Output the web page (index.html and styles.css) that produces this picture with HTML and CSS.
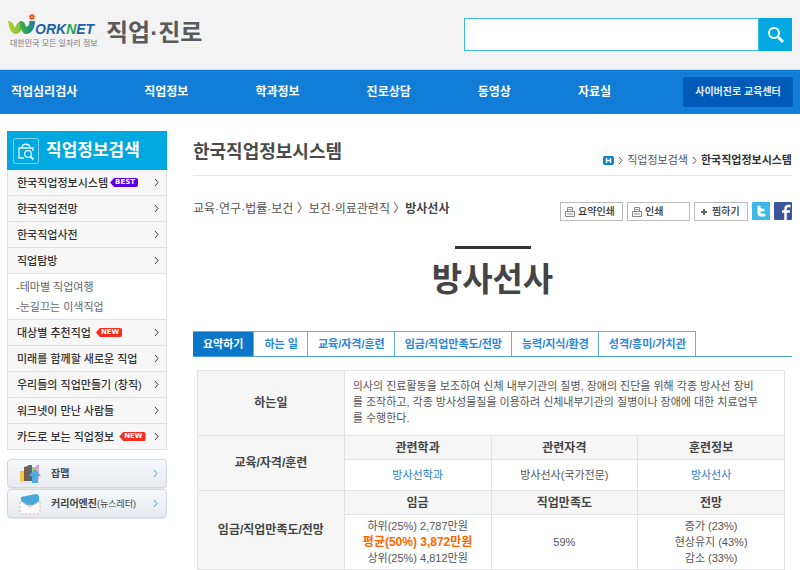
FILE: index.html
```html
<!DOCTYPE html>
<html lang="ko">
<head>
<meta charset="utf-8">
<title>워크넷 직업·진로</title>
<link rel="stylesheet" href="styles.css">
</head>
<body>
<svg class="defs" width="0" height="0" aria-hidden="true">
  <symbol id="chevron" viewBox="0 0 5 9"><path d="M1 1l3 3.500-3 3.500" fill="none" stroke="currentColor"/></symbol>
  <symbol id="printer" viewBox="0 0 10 10"><path d="M2.500 4.500v-4h5v4M.5 9.500v-5h9v5zM2 7h6M3.500 2.500h3" fill="none" stroke="currentColor"/></symbol>
</svg>
<header class="top">
  <a class="brand" href="#" aria-label="WORKNET">
    <svg class="logo" viewBox="0 0 88 22" aria-hidden="true">
      <defs>
        <linearGradient id="leaf" x1="0" x2="1"><stop offset="0" stop-color="#b2cf2c"/><stop offset=".65" stop-color="#8fc63b"/><stop offset="1" stop-color="#32a75a"/></linearGradient>
        <linearGradient id="stem" x1="0" x2="1"><stop offset="0" stop-color="#4cb04a"/><stop offset=".6" stop-color="#1f9a62"/><stop offset="1" stop-color="#2674b8"/></linearGradient>
      </defs>
      <path d="M0 7c4 0 5 2 7 7 2-5 4-7 7-7l2 3c-2 6-5 10-8 10C3 20 1 14 0 7z" fill="url(#leaf)"/>
      <path d="M11 8c4-2 6 0 7 5 3-1 4-4 3-6h6c0 8-4 13-9 13-4 0-5-6-7-12z" fill="url(#stem)"/>
      <circle cx="24" cy="3" r="2.700" fill="#e8501f"/><circle cx="24" cy="3" r="1" fill="#f9a33a"/>
      <text class="logo-text" x="27" y="20" fill="#1d63ad">ORK<tspan fill="#25a556">N</tspan>ET</text>
    </svg>
    <span class="tagline">대한민국 모든 일자리 정보</span>
  </a>
  <a class="section-name" href="#">직업·진로</a>
  <form class="search">
    <input type="text" aria-label="검색어">
    <button type="button" aria-label="검색"><svg viewBox="0 0 18 18"><circle cx="7" cy="7" r="5" fill="none" stroke="#fff" stroke-width="2"/><path d="M11 11l5 5" stroke="#fff" stroke-width="3"/></svg></button>
  </form>
</header>
<nav class="gnb">
  <div class="gnb-links">
    <a href="#">직업심리검사</a><a href="#">직업정보</a><a href="#">학과정보</a><a href="#">진로상담</a><a href="#">동영상</a><a href="#">자료실</a>
  </div>
  <a class="edu" href="#">사이버진로 교육센터</a>
</nav>
<div class="page">
  <aside>
    <div class="side-title">
      <svg viewBox="0 0 26 26" aria-hidden="true"><rect x=".5" y=".5" width="25" height="25" rx="2" fill="none" stroke="#7fd4f1"/><path d="M11 20H6V10h14v3M9 10c0-5 8-5 8 0" fill="none" stroke="#e4f6fc" stroke-width="1.300"/><circle cx="15" cy="16" r="3.300" fill="none" stroke="#e4f6fc" stroke-width="1.300"/><path d="M17.500 18.500l3 3" stroke="#e4f6fc" stroke-width="1.800"/></svg>
      <h2>직업정보검색</h2>
    </div>
    <ul class="menu">
      <li><a href="#">한국직업정보시스템<span class="badge best">BEST</span><svg class="chev"><use href="#chevron"/></svg></a></li>
      <li><a href="#">한국직업전망<svg class="chev"><use href="#chevron"/></svg></a></li>
      <li><a href="#">한국직업사전<svg class="chev"><use href="#chevron"/></svg></a></li>
      <li><a href="#">직업탐방<svg class="chev"><use href="#chevron"/></svg></a>
        <ul class="sub"><li><a href="#">-테마별 직업여행</a></li><li><a href="#">-눈길끄는 이색직업</a></li></ul></li>
      <li><a href="#">대상별 추천직업<span class="badge new">NEW</span><svg class="chev"><use href="#chevron"/></svg></a></li>
      <li><a href="#">미래를 함께할 새로운 직업<svg class="chev"><use href="#chevron"/></svg></a></li>
      <li><a href="#">우리들의 직업만들기 (창직)<svg class="chev"><use href="#chevron"/></svg></a></li>
      <li><a href="#">워크넷이 만난 사람들<svg class="chev"><use href="#chevron"/></svg></a></li>
      <li><a href="#">카드로 보는 직업정보<span class="badge new">NEW</span><svg class="chev"><use href="#chevron"/></svg></a></li>
    </ul>
    <div class="banners">
      <a href="#"><svg class="pic" viewBox="0 0 22 22" aria-hidden="true"><path d="M1 8h4v10H1z" fill="#efc94b"/><path d="M5 4l4-1v15H5z" fill="#7d5a48"/><path d="M9 2h4v16H9z" fill="#5b6675"/><path d="M13 4h4v14h-4z" fill="#a8cf63"/><path d="M17 2h3v14h-3z" fill="#dda5d8"/><path d="M16 6l6 7h-3v7h-6v-7h-3z" fill="#4fade0"/><path d="M1 19h11" stroke="#cfd4d8"/></svg><b>잡맵</b><svg class="chev"><use href="#chevron"/></svg></a>
      <a href="#"><svg class="pic" viewBox="0 0 22 22" aria-hidden="true"><path d="M1 8v11q0 2 2 2h16q2 0 2-2V8z" fill="#fbfbfc"/><path d="M1 9v10q0 2 2 2h16q2 0 2-2V9" fill="none" stroke="#e5a7a7" stroke-dasharray="2 2"/><path d="M2 4l15-3q3 0 3 3v5l-5 3H7L2 8z" fill="#4aa9dc"/><path d="M1 8l10 6 10-6" fill="none" stroke="#d5d8de"/><circle cx="11" cy="13" r="1.500" fill="#e8c48a"/></svg><b>커리어엔진</b><small>(뉴스레터)</small><svg class="chev"><use href="#chevron"/></svg></a>
    </div>
  </aside>
  <main>
    <div class="heading">
      <h1>한국직업정보시스템</h1>
      <div class="path"><a class="home" href="#" aria-label="홈"><svg viewBox="0 0 11 9"><rect width="11" height="9" rx="2" fill="#0784cc"/><path d="M3.500 2v5M7.500 2v5M3 4.500h5" stroke="#fff" stroke-width="1.500"/></svg></a><svg class="chev"><use href="#chevron"/></svg><a href="#">직업정보검색</a><svg class="chev"><use href="#chevron"/></svg><b>한국직업정보시스템</b></div>
    </div>
    <div class="tools">
      <div class="trail">교육·연구·법률·보건 〉보건·의료관련직 〉<b>방사선사</b></div>
      <div class="actions">
        <button class="print"><svg><use href="#printer"/></svg>요약인쇄</button>
        <button class="print"><svg><use href="#printer"/></svg>인쇄</button>
        <button class="pick"><svg viewBox="0 0 10 10"><path d="M5 2v6M2 5h6" stroke="#666" stroke-width="2"/></svg>찜하기</button>
        <a class="sns" href="#" aria-label="트위터"><svg viewBox="0 0 18 18"><rect width="18" height="18" rx="1" fill="#41b7e8"/><path d="M7 5v6q0 2 2 2h3M7 8h4" fill="none" stroke="#fff" stroke-width="3" stroke-linecap="round"/></svg></a>
        <a class="sns" href="#" aria-label="페이스북"><svg viewBox="0 0 18 18"><rect width="18" height="18" rx="1" fill="#3a579d"/><path d="M11.500 18V7q0-3 2.500-3h2.500M8 9.500h8" fill="none" stroke="#fff" stroke-width="2.500"/></svg></a>
      </div>
    </div>
    <h2 class="job">방사선사</h2>
    <div class="tabs"><a class="on" href="#">요약하기</a><a href="#">하는 일</a><a href="#">교육/자격/훈련</a><a href="#">임금/직업만족도/전망</a><a href="#">능력/지식/환경</a><a href="#">성격/흥미/가치관</a></div>
    <table>
      <tbody>
        <tr class="desc"><th scope="row">하는일</th><td colspan="3">의사의 진료활동을 보조하여 신체 내부기관의 질병, 장애의 진단을 위해 각종 방사선 장비<br>를 조작하고, 각종 방사성물질을 이용하려 신체내부기관의 질병이나 장애에 대한 치료업무<br>를 수행한다.</td></tr>
        <tr class="sub-head"><th scope="rowgroup" rowspan="2">교육/자격/훈련</th><th>관련학과</th><th>관련자격</th><th>훈련정보</th></tr>
        <tr class="links"><td><a href="#">방사선학과</a></td><td>방사선사(국가전문)</td><td><a href="#">방사선사</a></td></tr>
        <tr class="sub-head"><th scope="rowgroup" rowspan="2">임금/직업만족도/전망</th><th>임금</th><th>직업만족도</th><th>전망</th></tr>
        <tr class="stats"><td>하위(25%) 2,787만원<br><strong>평균(50%) 3,872만원</strong><br>상위(25%) 4,812만원</td><td>59%</td><td>증가 (23%)<br>현상유지 (43%)<br>감소 (33%)</td></tr>
      </tbody>
    </table>
  </main>
</div>
</body>
</html>
```
FILE: styles.css
```css
* { box-sizing: border-box; }
body {
  margin: 0;
  font: 11px/16px "Liberation Sans", "Noto Sans CJK KR", sans-serif;
  color: #555;
  background: #fff;
}
a { color: inherit; text-decoration: none; }
h1, h2, ul { margin: 0; padding: 0; list-style: none; }
button, input { font: inherit; }
svg { display: block; flex: none; }
.defs { position: absolute; }
.chev { width: 5px; height: 9px; }

.top {
  display: flex;
  align-items: flex-start;
  height: 70px;
  padding: 14px 8px 0;
  background: #f3f3f3;
  border-bottom: 1px solid #c5daeb;
}
.brand { display: block; width: 98px; white-space: nowrap; }
.logo { width: 88px; height: 22px; overflow: visible; }
.logo-text { font: italic bold 14px "Liberation Sans", sans-serif; }
.tagline { display: block; padding-left: 2px; font-size: 8px; line-height: 15px; color: #777; }
.section-name { font-size: 24px; line-height: 38px; font-weight: 700; color: #5a5a5a; }
.search { display: flex; width: 328px; height: 33px; margin: 4px 0 0 auto; }
.search input { flex: 1; min-width: 0; border: 1px solid #3db9e3; background: #fff; padding: 0 8px; }
.search button { width: 33px; border: 0; padding: 0 8px; background: #00a8e1; }
.search svg { width: 18px; height: 18px; }

.gnb {
  display: flex;
  align-items: center;
  justify-content: space-between;
  height: 44px;
  padding: 0 7px 0 11px;
  background: #127dd7;
  color: #fff;
}
.gnb-links { display: flex; gap: 67px; font-size: 12px; font-weight: 700; }
.edu {
  width: 110px;
  line-height: 30px;
  border-radius: 3px;
  background: #005bb8;
  color: #e6effa;
  font-size: 10px;
  font-weight: 700;
  text-align: center;
}

.page { display: flex; gap: 25px; padding: 17px 8px 0 7px; }
aside { flex: none; width: 160px; }
.side-title {
  display: flex;
  align-items: center;
  gap: 7px;
  height: 39px;
  padding-left: 6px;
  background: #00a8e1;
  color: #fff;
}
.side-title svg { width: 26px; height: 26px; }
.side-title h2 { font-size: 17px; font-weight: 700; line-height: 24px; }
.menu { border: 1px solid #e2e2e2; border-top: 0; background: #f7f7f7; color: #333; font-weight: 500; }
.menu > li + li { border-top: 1px solid #e2e2e2; }
.menu > li > a { display: flex; align-items: center; height: 25px; padding: 0 7px 0 9px; white-space: nowrap; }
.menu .chev { margin-left: auto; }
.sub { padding: 3px 0 2px 8px; border-top: 1px solid #dce5ea; background: #fff; color: #666; font-weight: 400; }
.sub li { line-height: 20px; }
.badge {
  height: 9px;
  padding: 0 3px 0 5px;
  border-radius: 2px;
  font: bold 7px/9px "DejaVu Sans", sans-serif;
  color: #fff;
  clip-path: polygon(0 50%, 4px 0, 100% 0, 100% 100%, 4px 100%);
}
.best { margin-left: 2px; background: #5a00e0; }
.new { margin-left: 5px; background: #f62c20; }

.banners { display: grid; gap: 1px; padding-top: 9px; }
.banners a {
  display: flex;
  align-items: center;
  height: 29px;
  padding: 0 8px 0 11px;
  border: 1px solid #d3d8df;
  border-radius: 4px;
  background: linear-gradient(#f5f8fa, #e8ebef);
  box-shadow: 0 1px 1px #e4e6e9;
  color: #444;
  font-size: 10px;
  white-space: nowrap;
}
.banners small { font-size: 9px; }
.pic { width: 22px; height: 22px; margin-right: 10px; }
.banners .chev { margin-left: auto; color: #4a9bd0; }

main { flex: 1; min-width: 0; padding-left: 1px; }
.heading { display: flex; justify-content: space-between; height: 45px; border-bottom: 1px solid #e6e6e6; }
h1 { font-size: 18px; line-height: 42px; font-weight: 700; color: #4a4a4a; }
.path { display: flex; align-items: center; gap: 4px; height: 58px; }
.path b { color: #333; }
.home svg { width: 11px; height: 9px; }
.tools { display: flex; justify-content: space-between; align-items: flex-start; padding-top: 26px; height: 45px; }
.trail { font-size: 12px; line-height: 14px; }
.trail b { font-weight: 700; color: #444; }
.actions { display: flex; gap: 4px; }
.actions button {
  display: flex;
  align-items: center;
  gap: 3px;
  height: 19px;
  padding: 0 4px;
  border: 1px solid #bbb;
  background: #fff;
  color: #333;
  font-size: 10px;
  font-weight: 500;
  white-space: nowrap;
}
.actions button svg { width: 10px; height: 10px; color: #888; }
.actions .print { width: 63px; }
.actions .pick { width: 54px; }
.sns svg { width: 18px; height: 18px; }
.job { margin-top: 25px; font-size: 33px; line-height: 61px; font-weight: 700; color: #444; text-align: center; }
.job::before { content: ""; display: block; width: 76px; height: 3px; margin: 0 auto; background: #333; }
.tabs { display: flex; margin-top: 21px; border-bottom: 1px solid #4a9fe0; color: #2a87d9; font-weight: 700; }
.tabs a { padding: 0 9px 0 10px; line-height: 24px; border: 1px solid #62aee8; border-width: 1px 1px 0 0; white-space: nowrap; }
.tabs .on { padding: 0 10px; background: #0c76cb; color: #fff; }

table { width: 588px; max-width: 100%; margin: 13px 0 0 4px; border-collapse: collapse; table-layout: fixed; }
th, td { border: 1px solid #e2e2e2; padding: 0 8px; text-align: center; }
th { background: #f6f6f6; font-size: 12px; color: #444; white-space: nowrap; }
.desc { height: 65px; }
.desc td { padding: 0 0 2px 8px; text-align: left; white-space: nowrap; }
.sub-head { height: 24px; }
.links { height: 31px; }
.links a { color: #2a7fcb; }
.stats { height: 55px; }
.stats strong { font-size: 12px; color: #f60; white-space: nowrap; }
```
